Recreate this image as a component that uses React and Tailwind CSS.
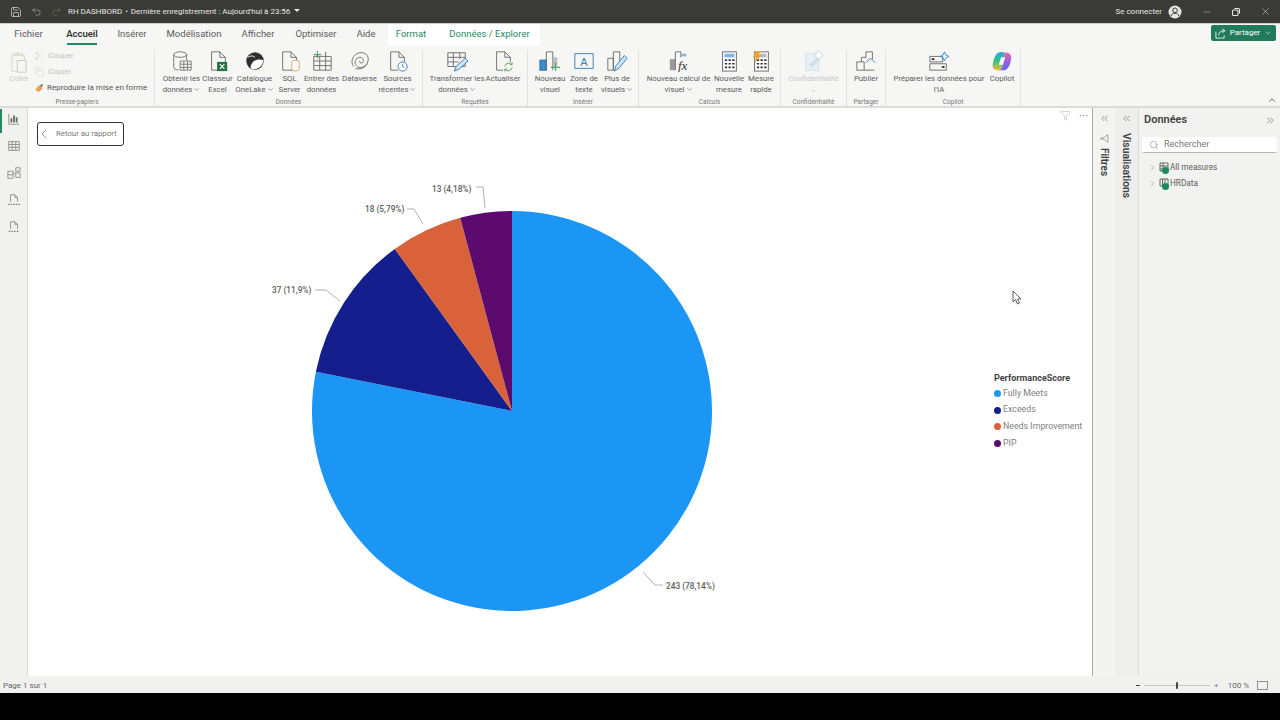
import { ChevronRight, ChevronLeft, ChevronDown, ChevronUp, ChevronsLeft, ChevronsRight, Search, Minus, X, Undo2, Redo2, Save, Scissors, Copy, Filter, MoreHorizontal } from "lucide-react";

const font = { fontFamily: 'Roboto, "Noto Sans", sans-serif' };

const tabs = [
  { label: "Fichier", w: "w-[27px]" },
  { label: "Accueil", w: "w-[30px] ml-[4px]", active: true },
  { label: "Insérer", w: "w-[28px]" },
  { label: "Modélisation", w: "w-[54px]" },
  { label: "Afficher", w: "w-[32px]" },
  { label: "Optimiser", w: "w-[40px] ml-[1px]" },
  { label: "Aide", w: "w-[18px]" },
];

const slices = [
  { name: "Fully Meets", pct: 78.14, color: "#1c96f5" },
  { name: "Exceeds", pct: 11.9, color: "#141e8c" },
  { name: "Needs Improvement", pct: 5.79, color: "#d9623a" },
  { name: "PIP", pct: 4.17, color: "#5c0a6e" },
];

const labels = [
  { text: "243 (78,14%)", x: 638, y: 481, line: "615,464 627,477 635,477" },
  { text: "37 (11,9%)", x: 244, y: 185, line: "312,193 298,182 287,182" },
  { text: "18 (5,79%)", x: 337, y: 104, line: "395,116 386,101 379,101" },
  { text: "13 (4,18%)", x: 404, y: 84, line: "457,100 455,79 448,79" },
];

// centre and radius in canvas coordinates
const cx = 484;
const cy = 303;
const r = 200;

function pieSlices() {
  let acc = 0;
  return slices.map((s) => {
    const a0 = (acc / 100) * Math.PI * 2;
    acc += s.pct;
    const a1 = (acc / 100) * Math.PI * 2;
    const x0 = cx + r * Math.sin(a0);
    const y0 = cy - r * Math.cos(a0);
    const x1 = cx + r * Math.sin(a1);
    const y1 = cy - r * Math.cos(a1);
    const large = s.pct > 50 ? 1 : 0;
    return { ...s, d: `M${cx} ${cy} L${x0} ${y0} A${r} ${r} 0 ${large} 1 ${x1} ${y1} Z` };
  });
}

const Ico = ({ children, w = 22, h = 22 }) => (
  <svg width={w} height={h} viewBox="0 0 24 24" fill="none" stroke="#6b6b6b" strokeWidth="1">
    {children}
  </svg>
);

const DbIcon = () => (
  <Ico>
    <ellipse cx="10" cy="5" rx="7" ry="3" />
    <path d="M3 5v14c0 1.5 2 2.5 5 2.8M17 5v6" />
    <path d="M10 12h12v10H10zM10 15.5h12M10 19h12M14 12v10M18 12v10" strokeWidth="0.9" />
  </Ico>
);
const ExcelIcon = () => (
  <Ico>
    <path d="M5 2h9l6 6v14H5zM14 2v6h6" />
    <rect x="11" y="13" width="11" height="10" fill="#217346" stroke="none" />
    <path d="M14 15.5l5 5M19 15.5l-5 5" stroke="#fff" strokeWidth="1.2" />
  </Ico>
);
const OneLakeIcon = () => (
  <Ico>
    <circle cx="12" cy="12" r="9.5" fill="#2f2f2f" stroke="none" />
    <path d="M7 19C8 12 14 9 21 11C21 17 16 21 11 21C9 21 8 20 7 19Z" fill="#fff" stroke="none" />
    <path d="M4 8c3-2 6-2 8 0" stroke="#fff" strokeWidth="1" />
  </Ico>
);
const SqlIcon = () => (
  <Ico>
    <path d="M4 2h9l6 6v14H4zM13 2v6h6" />
    <ellipse cx="18" cy="13" rx="4" ry="1.8" fill="#fff" stroke="#d9a066" />
    <path d="M14 13v8c0 1 2 1.8 4 1.8s4-.8 4-1.8v-8" fill="#fff" stroke="#d9a066" />
  </Ico>
);
const TableIcon = () => (
  <Ico>
    <path d="M3 7h19v15H3zM3 12h19M3 17h19M9.5 7v15M16 7v15M16 2v5" />
    <path d="M7 1v8M3 5h8" stroke="#4da65b" strokeWidth="1.2" />
  </Ico>
);
const DataverseIcon = () => (
  <Ico>
    <path d="M5 18C1 13 4 4 12 3c7-1 11 5 8 11-2 5-9 7-12 3-3-3-1-9 4-9 4 0 5 5 2 6-2 1-3-1-2-2" />
    <path d="M7 20c5 2 11-1 13-5" />
  </Ico>
);
const RecentIcon = () => (
  <Ico>
    <path d="M4 2h9l6 6v5M13 2v6h6M4 2v20h8" />
    <circle cx="17" cy="18" r="5" fill="#fff" stroke="#2f7fb5" />
    <path d="M17 15.5V18l2 1" stroke="#2f7fb5" />
  </Ico>
);
const TransformIcon = () => (
  <Ico>
    <path d="M2 3h19v15H2zM2 8h19M2 13h12M8 3v15M15 3v7" />
    <path d="M9 23l2-5 10-9 3 3-10 9z" fill="#cfe4f5" stroke="#2f7fb5" />
  </Ico>
);
const RefreshIcon = () => (
  <Ico>
    <path d="M5 2h9l6 6v5M14 2v6h6M5 2v20h7" />
    <path d="M14 18a4.5 4.5 0 0 1 8-2M22 19a4.5 4.5 0 0 1-8 2M22 13.5V16h-2.5M14 23.5V21h2.5" stroke="#4da65b" />
  </Ico>
);
const NewVisualIcon = () => (
  <Ico>
    <rect x="1" y="11" width="7" height="11" fill="#3a8ed0" stroke="#2b6c9f" />
    <path d="M8 22V2h7v20" />
    <rect x="15" y="8" width="5" height="10" fill="#bdbdbd" stroke="none" />
    <path d="M18 14v9M13 19h10" stroke="#4da65b" strokeWidth="1.2" />
  </Ico>
);
const TextBoxIcon = () => (
  <Ico>
    <rect x="2" y="4" width="20" height="16" stroke="#3a7fb0" />
    <text x="12" y="17" textAnchor="middle" fontSize="12" fill="#3a7fb0" stroke="none" fontFamily="Liberation Sans">A</text>
  </Ico>
);
const MoreVisualsIcon = () => (
  <Ico>
    <path d="M2 9h6v13H2zM8 22V2h7v10" />
    <path d="M9 23l2-6 9-11 3 3-9 11z" fill="#cfe4f5" stroke="#2f7fb5" />
  </Ico>
);
const FxIcon = () => (
  <Ico>
    <rect x="2" y="10" width="6" height="12" fill="#9a9a9a" stroke="none" />
    <path d="M8 22V2h6v6" />
    <rect x="14" y="4" width="6" height="3" fill="#7fb8e6" stroke="none" />
    <text x="16" y="22" textAnchor="middle" fontSize="14" fontStyle="italic" fill="#333" stroke="none" fontFamily="Liberation Serif">fx</text>
  </Ico>
);
const CalcIcon = ({ bolt }) => (
  <Ico>
    <rect x="5" y="2" width="15" height="21" fill="#fff" stroke="#666" />
    <rect x="7" y="4" width="11" height="4" fill={bolt ? "#bbb" : "#7fb8e6"} stroke="none" />
    <path d="M7.5 11h2.5M11.5 11h2.5M15.5 11h2.5M7.5 15h2.5M11.5 15h2.5M15.5 15h2.5M7.5 19h2.5M11.5 19h2.5M15.5 19h2.5" stroke="#333" strokeWidth="1.8" />
    {bolt && <path d="M6 1h6l-3 5h3L5 14l1.500-6H3z" fill="#e8a33d" stroke="none" />}
  </Ico>
);
const ShieldIcon = () => (
  <Ico>
    <path d="M3 4h14v18H3z" stroke="#cfe0ea" fill="#e9f1f6" />
    <path d="M6 16l10-9 3 3-9 9z" fill="#cfe0ea" stroke="none" />
    <path d="M16 1l6 4-4 5-5-3z" fill="#fff" stroke="#cfd6da" />
  </Ico>
);
const PublishIcon = () => (
  <Ico>
    <path d="M2 13h8v9H2zM7 13V8h5M12 8V2h7v8M10 22h11" />
    <path d="M12 14l5-5 5 5" stroke="#2f7fb5" />
  </Ico>
);
const PrepIcon = () => (
  <Ico>
    <path d="M2 7h14v6H2zM2 15h18v7H2z" />
    <rect x="4" y="9" width="3" height="2" fill="#333" stroke="none" />
    <rect x="15" y="17.500" width="3" height="2" fill="#333" stroke="none" />
    <path d="M18 2l1.500 3.500L23 7l-3.500 1.500L18 12l-1.500-3.500L13 7l3.500-1.500z" stroke="#3a8ed0" />
  </Ico>
);
const CopilotIcon = () => (
  <svg width="22" height="22" viewBox="0 0 24 24">
    <defs>
      <linearGradient id="cpA" x1="0" y1="0" x2="0" y2="1">
        <stop offset="0" stopColor="#2aa7ea" />
        <stop offset="0.5" stopColor="#37c27b" />
        <stop offset="1" stopColor="#f6b73c" />
      </linearGradient>
      <linearGradient id="cpB" x1="0" y1="0" x2="0" y2="1">
        <stop offset="0" stopColor="#ef6d9e" />
        <stop offset="0.5" stopColor="#9a5be6" />
        <stop offset="1" stopColor="#5d6ff0" />
      </linearGradient>
    </defs>
    <path d="M15 3C19 2 23 5 22 10C21 15 19 22 14 22L7 22C10 22 11 20 12 18Z" fill="url(#cpB)" />
    <path d="M8 3C10 2 13 2 15 3L12 20C11 22 9 22 7 22C3 22 1 19 2 15C3 10 5 4 8 3Z" fill="url(#cpA)" />
    <path d="M11 8h4.500L13 16H8.500Z" fill="#fff" />
  </svg>
);

const RibbonBtn = ({ w, icon, lines, chevron, muted }) => (
  <div className={`flex flex-col items-center shrink-0 ${w}`}>
    <div className="h-[22px] flex items-center justify-center">{icon}</div>
    <div className={`mt-[1px] text-center text-[7.800px] leading-[11px] whitespace-nowrap ${muted ? "text-[#c4c8ca]" : "text-[#5c5c5c]"}`}>
      {lines.map((l, i) => (
        <div key={i} className="flex items-center justify-center h-[11px]">
          {l}
          {chevron && i === lines.length - 1 && <ChevronDown size={7} strokeWidth={2} className="ml-[1px]" />}
        </div>
      ))}
    </div>
  </div>
);

const Group = ({ w, label, children, pl = "" }) => (
  <div className={`flex flex-col shrink-0 h-full border-r border-[#e2e2e0] ${w}`}>
    <div className={`flex flex-1 justify-center ${pl}`}>{children}</div>
    <div className="h-[9px] translate-y-[1px] text-center text-[6.5px] leading-[9px] text-[#777]">{label}</div>
  </div>
);

const RailIcon = ({ children }) => (
  <svg width="14" height="14" viewBox="0 0 16 16" fill="none" stroke="#8a8a88" strokeWidth="1">
    {children}
  </svg>
);

const TreeRow = ({ label, icon }) => (
  <div className="flex items-center h-[16px] pl-[9px]">
    <ChevronRight size={9} strokeWidth={1.2} className="text-[#666]" />
    <div className="relative ml-[2px] w-[10px] h-[10px]">
      <svg width="10" height="10" viewBox="0 0 10 10" fill="none" stroke="#555" strokeWidth="0.9">
        {icon}
      </svg>
      <span className="absolute left-[3px] top-[5px] w-[7px] h-[7px] rounded-full bg-[#1d8a5e]" />
    </div>
    <span className="ml-[1px] text-[8.200px] text-[#5c5c5c]">{label}</span>
  </div>
);

export default function App() {
  return (
    <div style={font} className="w-[1280px] h-[720px] flex flex-col overflow-hidden bg-black">
      {/* title bar */}
      <div className="h-[23px] shrink-0 flex items-center bg-[#3a3a36] text-[#e6e6e4] text-[8px]">
        <Save size={12} strokeWidth={1.3} className="ml-[10px]" />
        <Undo2 size={11} strokeWidth={1.2} className="ml-[9px] text-[#bdbdbb]" />
        <Redo2 size={11} strokeWidth={1.2} className="ml-[9px] text-[#77776f]" />
        <span className="ml-[6px] whitespace-nowrap">RH DASHBORD</span>
        <span className="mx-[3px]">•</span>
        <span className="whitespace-nowrap">Dernière enregistrement : Aujourd'hui à 23:56</span>
        <span className="ml-[4px] w-0 h-0 border-x-[3px] border-x-transparent border-t-[3px] border-t-[#e6e6e4] -mt-[3px]" />
        <span className="ml-auto whitespace-nowrap">Se connecter</span>
        <svg width="14" height="14" viewBox="0 0 14 14" className="ml-[6px]">
          <circle cx="7" cy="7" r="6.500" fill="#e6e6e4" />
          <circle cx="7" cy="5.300" r="2.300" fill="none" stroke="#3a3a36" strokeWidth="1" />
          <path d="M3 11c.6-2 2-2.800 4-2.800s3.400.8 4 2.800" fill="none" stroke="#3a3a36" strokeWidth="1" />
        </svg>
        <Minus size={10} strokeWidth={1} className="ml-[20px]" />
        <svg width="10" height="10" viewBox="0 0 10 10" fill="none" stroke="#e6e6e4" strokeWidth="1.100" className="ml-[19px]">
          <rect x="1.500" y="3" width="5.500" height="5.500" rx="1" />
          <path d="M3.500 1.500h4a1 1 0 0 1 1 1v4" />
        </svg>
        <X size={11} strokeWidth={1.1} className="ml-[19px] mr-[9px]" />
      </div>

      {/* tabs */}
      <div className="h-[23px] shrink-0 flex items-start bg-[#f6f6f5] text-[9.500px] text-[#5c5c5c] border-t border-[#cfcfcd]">
        <div className="flex gap-[21px] ml-[15px] h-[20px] items-center">
          {tabs.map((t) => (
            <div key={t.label} className={`relative whitespace-nowrap text-center h-full flex items-center justify-center ${t.w} ${t.active ? "font-semibold text-[#333]" : ""}`}>
              {t.label}
              {t.active && <span className="absolute left-0 right-0 bottom-[-1px] h-[2px] bg-[#1f8a65]" />}
            </div>
          ))}
        </div>
        <div className="ml-[13px] h-full w-[46px] flex items-center justify-center bg-white text-[#1f8a65] whitespace-nowrap pb-[2px]">Format</div>
        <div className="h-full w-[106px] flex items-center justify-center bg-white text-[#1f8a65] whitespace-nowrap pb-[2px] pl-[5px]">Données / Explorer</div>
        <div className="ml-auto mr-[4px] mt-[1px] w-[65px] h-[16px] rounded-[2px] bg-[#217a5b] text-white text-[8px] flex items-center justify-center gap-[4px]">
          <svg width="11" height="11" viewBox="0 0 12 12" fill="none" stroke="#fff" strokeWidth="0.9">
            <path d="M1 4v7h9V8M4 8c0-3 2-5 6-5M8 1l3 2-3 2" />
          </svg>
          Partager
          <ChevronDown size={8} strokeWidth={1.6} />
        </div>
      </div>

      {/* ribbon */}
      <div className="h-[62px] shrink-0 flex items-stretch bg-[#f6f6f5] border-b-2 border-[#dcdcda] pt-[4px]">
        <div className="flex flex-col shrink-0 h-full w-[155px] border-r border-[#e2e2e0]">
          <div className="flex flex-1">
            <div className="ml-[8px] w-[22px] flex flex-col items-center text-[7.500px] leading-[11px] text-[#c9c9c7]">
              <svg width="20" height="23" viewBox="0 0 22 26" fill="none" stroke="#d9d2bd" strokeWidth="1">
                <path d="M5 8V4h10v4M10 2v4M3 6h14v6M3 6v18h5" />
                <rect x="9" y="12" width="10" height="13" fill="#f6f6f5" stroke="#c4c4c2" />
              </svg>
              <span>Coller</span>
            </div>
            <div className="ml-[4px] -mt-[2px] flex flex-col text-[8px] text-[#c4c4c2] leading-[16px]">
              <div className="flex items-center h-[16px]">
                <Scissors size={10} strokeWidth={1} className="mr-[4px]" />
                Couper
              </div>
              <div className="flex items-center h-[16px]">
                <Copy size={10} strokeWidth={1} className="mr-[4px]" />
                Copier
              </div>
              <div className="flex items-center h-[16px] text-[#555] whitespace-nowrap">
                <svg width="10" height="10" viewBox="0 0 10 10" className="mr-[3px]">
                  <path d="M1 7l4-5 4 3-4 4z" fill="#e0a94f" />
                  <path d="M6 3l2-2 1 1-2 2z" fill="#555" />
                </svg>
                Reproduire la mise en forme
              </div>
            </div>
          </div>
          <div className="h-[9px] translate-y-[1px] text-center text-[6.500px] leading-[9px] text-[#777]">Presse-papiers</div>
        </div>

        <Group w="w-[268px]" label="Données">
          <RibbonBtn w="w-[41px]" icon={<DbIcon />} lines={["Obtenir les", "données"]} chevron />
          <RibbonBtn w="w-[31px]" icon={<ExcelIcon />} lines={["Classeur", "Excel"]} />
          <RibbonBtn w="w-[43px]" icon={<OneLakeIcon />} lines={["Catalogue", "OneLake"]} chevron />
          <RibbonBtn w="w-[27px]" icon={<SqlIcon />} lines={["SQL", "Server"]} />
          <RibbonBtn w="w-[37px]" icon={<TableIcon />} lines={["Entrer des", "données"]} />
          <RibbonBtn w="w-[39px]" icon={<DataverseIcon />} lines={["Dataverse"]} />
          <RibbonBtn w="w-[37px]" icon={<RecentIcon />} lines={["Sources", "récentes"]} chevron />
        </Group>

        <Group w="w-[105px]" label="Requêtes">
          <RibbonBtn w="w-[56px]" icon={<TransformIcon />} lines={["Transformer les", "données"]} chevron />
          <RibbonBtn w="w-[36px]" icon={<RefreshIcon />} lines={["Actualiser"]} />
        </Group>

        <Group w="w-[111px]" label="Insérer">
          <RibbonBtn w="w-[35px]" icon={<NewVisualIcon />} lines={["Nouveau", "visuel"]} />
          <RibbonBtn w="w-[33px]" icon={<TextBoxIcon />} lines={["Zone de", "texte"]} />
          <RibbonBtn w="w-[33px]" icon={<MoreVisualsIcon />} lines={["Plus de", "visuels"]} chevron />
        </Group>

        <Group w="w-[142px]" label="Calculs" pl="pl-[2px]">
          <RibbonBtn w="w-[68px]" icon={<FxIcon />} lines={["Nouveau calcul de", "visuel"]} chevron />
          <RibbonBtn w="w-[33px]" icon={<CalcIcon />} lines={["Nouvelle", "mesure"]} />
          <RibbonBtn w="w-[31px]" icon={<CalcIcon bolt />} lines={["Mesure", "rapide"]} />
        </Group>

        <Group w="w-[66px]" label="Confidentialité">
          <RibbonBtn w="w-[60px]" icon={<ShieldIcon />} lines={["Confidentialité", "⌄"]} muted />
        </Group>

        <Group w="w-[39px]" label="Partager">
          <RibbonBtn w="w-[36px]" icon={<PublishIcon />} lines={["Publier"]} />
        </Group>

        <Group w="w-[135px]" label="Copilot" pl="pl-[4px]">
          <RibbonBtn w="w-[94px]" icon={<PrepIcon />} lines={["Préparer les données pour", "l'IA"]} />
          <RibbonBtn w="w-[32px]" icon={<CopilotIcon />} lines={["Copilot"]} />
        </Group>

        <div className="ml-auto mr-[3px] self-end mb-[1px]">
          <ChevronUp size={10} strokeWidth={2} className="text-[#444]" />
        </div>
      </div>

      {/* body */}
      <div className="h-[568px] shrink-0 flex bg-[#f1f1ef]">
        {/* left rail */}
        <div className="w-[28px] shrink-0 flex flex-col items-center gap-[13px] pt-[4px] relative border-r border-[#d8d8d6]">
          <span className="absolute left-0 top-[1px] w-[2px] h-[24px] bg-[#1f8a65]" />
          <RailIcon>
            <path d="M2 2v12h12" />
            <path d="M5 12V7M8 12V4M11 12V6" strokeWidth="2" stroke="#666" />
          </RailIcon>
          <RailIcon>
            <path d="M2 3h12v10H2zM2 6.300h12M2 9.600h12M6 3v10M10 3v10" />
          </RailIcon>
          <RailIcon>
            <path d="M1 6h6v8H1zM1 10h6M7 8h3M10 2h5v4h-5zM10 8h5v5h-5z" />
          </RailIcon>
          <RailIcon>
            <path d="M4 10V2h5l3 3v5M9 2v3h3" />
            <path d="M1 13h14" strokeWidth="1.600" strokeDasharray="2 1" />
          </RailIcon>
          <RailIcon>
            <path d="M4 10V2h5l3 3v5M9 2v3h3" />
            <path d="M2 13h12" strokeWidth="1.600" strokeDasharray="2 1" />
          </RailIcon>
        </div>

        {/* report canvas */}
        <div className="relative w-[1065px] h-[568px] shrink-0 bg-white border-r border-[#a8a8a6]">
          <div className="ml-[9px] mt-[14px] w-[87px] h-[24px] rounded-[3px] border-[1.500px] border-[#333] flex items-center text-[7.800px] text-[#777] whitespace-nowrap">
            <ChevronLeft size={16} strokeWidth={1} className="-ml-[2px] text-[#666]" />
            <span className="ml-[4px]">Retour au rapport</span>
          </div>

          <div className="absolute right-[3px] top-[2px] flex items-center gap-[7px] text-[#999]">
            <Filter size={11} strokeWidth={1} />
            <MoreHorizontal size={11} strokeWidth={1.2} />
          </div>

          {/* pie chart */}
          <svg width="1064" height="568" viewBox="0 0 1064 568" className="absolute left-0 top-0 pointer-events-none">
            {pieSlices().map((s) => (
              <path key={s.name} d={s.d} fill={s.color} />
            ))}
            {labels.map((l) => (
              <g key={l.text}>
                <polyline points={l.line} fill="none" stroke="#a0a0a0" strokeWidth="0.8" />
                <text x={l.x} y={l.y} fontSize="8.300" fontWeight="500" fill="#605e5c" style={font}>
                  {l.text}
                </text>
              </g>
            ))}
          </svg>

          {/* legend */}
          <div className="absolute left-[966px] top-[264px] w-[96px]">
            <div className="text-[9px] font-bold text-[#444] leading-[12px] mb-[1px]">PerformanceScore</div>
            {slices.map((s) => (
              <div key={s.name} className="flex items-center h-[16.700px] text-[8.800px] text-[#808080] whitespace-nowrap">
                <span className="w-[7px] h-[7px] rounded-full mr-[2px]" style={{ backgroundColor: s.color }} />
                {s.name}
              </div>
            ))}
          </div>

          {/* mouse pointer */}
          <svg width="10" height="15" viewBox="0 0 10 15" className="absolute left-[984px] top-[182px]">
            <path d="M1 1v11l2.500-2.500L5.500 14l2-1-2-4H9z" fill="#fff" stroke="#333" strokeWidth="0.8" />
          </svg>
        </div>

        {/* filters pane */}
        <div className="w-[22px] shrink-0 h-[568px] flex flex-col items-center bg-[#f3f3f1] pt-[5px] text-[#444]">
          <ChevronsLeft size={11} strokeWidth={1.2} />
          <Filter size={9} strokeWidth={1.2} className="mt-[10px] rotate-90" />
          <span className="mt-[5px] text-[10px] font-semibold [writing-mode:vertical-rl]">Filtres</span>
        </div>

        {/* visualisations pane */}
        <div className="w-[23px] shrink-0 h-[568px] flex flex-col items-center bg-[#eeeeec] pt-[5px] text-[#444]">
          <ChevronsLeft size={11} strokeWidth={1.2} />
          <span className="mt-[9px] text-[10.300px] font-semibold [writing-mode:vertical-rl]">Visualisations</span>
        </div>

        {/* data pane */}
        <div className="flex-1 h-[568px] border-l border-[#dcdcda] bg-[#f2f2f0]">
          <div className="flex items-center justify-between pl-[5px] pr-[4px] h-[24px]">
            <span className="text-[11px] font-semibold text-[#444]">Données</span>
            <ChevronsRight size={11} strokeWidth={1.2} className="text-[#444]" />
          </div>
          <div className="mx-[3px] mt-[5px] h-[16px] bg-white border-b border-[#b5b5b3] rounded-[2px] flex items-center text-[9px] text-[#777]">
            <Search size={10} strokeWidth={1.2} className="ml-[7px] mr-[5px]" />
            Rechercher
          </div>
          <div className="mt-[6px]">
            <TreeRow label="All measures" icon={<path d="M1 1h8v8H1zM1 4h8M1 7h8M4 1v8" />} />
            <TreeRow label="HRData" icon={<path d="M1 1h8v7H1zM3.500 1v7M6 1v7" />} />
          </div>
        </div>
      </div>

      {/* status bar */}
      <div className="h-[17px] shrink-0 flex items-center bg-[#f1f1ef] text-[8px] text-[#666] pt-[2px]">
        <span className="ml-[3px]">Page 1 sur 1</span>
        <span className="ml-auto w-[4px] h-[1px] bg-[#444]" />
        <div className="relative ml-[4px] w-[66px] h-[1px] bg-[#c6c6c4]">
          <span className="absolute left-[32px] top-[-3px] w-[2px] h-[7px] bg-[#444] rounded-[1px]" />
        </div>
        <span className="ml-[4px] text-[#777]">+</span>
        <span className="ml-[9px]">100 %</span>
        <svg width="11" height="9" viewBox="0 0 11 9" fill="none" stroke="#777" strokeWidth="0.8" className="ml-[8px] mr-[12px]">
          <rect x="0.500" y="0.500" width="10" height="8" />
        </svg>
      </div>
      <div className="h-[27px] shrink-0 bg-black" />
    </div>
  );
}
